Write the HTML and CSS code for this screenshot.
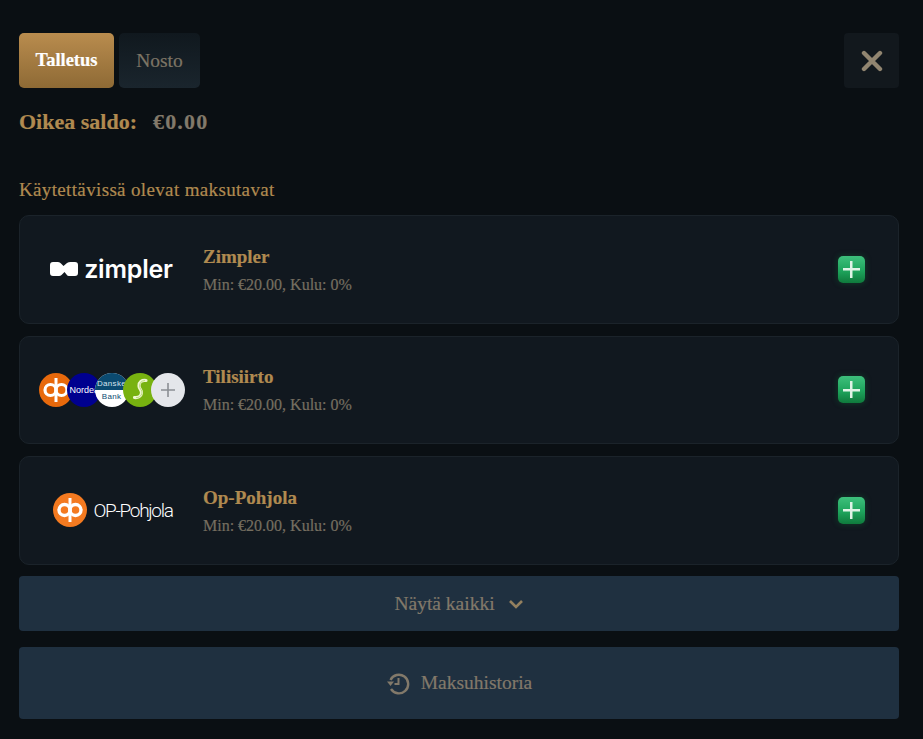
FILE: index.html
```html
<!DOCTYPE html>
<html lang="fi">
  <head>
    <meta charset="UTF-8" />
    <title>Talletus</title>
    <link rel="stylesheet" href="styles.css">
  </head>
  <body>
    <div class="top-row">
      <div class="tabs">
        <button class="tab tab-active">Talletus</button>
        <button class="tab tab-idle">Nosto</button>
      </div>
      <button class="close">
        <svg width="22" height="22" viewBox="0 0 22 22"><path d="M3 3 L19 19 M19 3 L3 19" stroke="#918570" stroke-width="4.4" stroke-linecap="round"/></svg>
      </button>
    </div>

    <div class="balance">
      <span class="balance-label">Oikea saldo:</span>
      <span class="balance-value">€0.00</span>
    </div>

    <h2 class="section-title">Käytettävissä olevat maksutavat</h2>

    <div class="methods">
      <div class="method">
        <div class="logo logo-zimpler">
          <svg width="28" height="14" viewBox="0 0 28 14"><path d="M3 0 H8 Q10 0 11 1.500 L13.500 4 L17 1 Q18.500 0 20.500 0 H25 Q28 0 28 3 V11 Q28 14 25 14 H19 Q17.500 14 16.500 12.500 L14.500 10 L11.500 13 Q10.500 14 9 14 H3 Q0 14 0 11 V3 Q0 0 3 0 Z" fill="#fff"/></svg>
          <span class="zimpler-name">zimpler</span>
        </div>
        <div class="method-info">
          <div class="method-name">Zimpler</div>
          <div class="method-meta">Min: €20.00, Kulu: 0%</div>
        </div>
        <span class="add"></span>
      </div>

      <div class="method">
        <div class="logo logo-banks">
          <span class="bank bank-op">
            <svg width="34" height="34" viewBox="0 0 34 34"><circle cx="11.500" cy="17" r="5.500" fill="none" stroke="#fff" stroke-width="3.200"/><circle cx="22.500" cy="17" r="5.500" fill="none" stroke="#fff" stroke-width="3.200"/><path d="M17 5V29" stroke="#fff" stroke-width="3"/></svg>
          </span>
          <span class="bank bank-nordea">Nordea</span>
          <span class="bank bank-danske"><span class="danske-top">Danske</span><span class="danske-bottom">Bank</span></span>
          <span class="bank bank-s">
            <svg width="34" height="34" viewBox="0 0 34 34"><path d="M23 7.500 C18.500 7 16 9 16 13 C16 16 19 17 18.500 20 C18 23.500 15 25 11.500 24.500" fill="none" stroke="#eef6d0" stroke-width="3.200" stroke-linecap="round"/><path d="M22 7.500 C18.500 7.500 16.500 10 16.500 13 C16.500 16 19.500 17 19 20 C18.500 23 15.500 25 13 24.500" fill="none" stroke="#a9cf5c" stroke-width="0.700"/></svg>
          </span>
          <span class="bank bank-more">
            <svg width="16" height="16" viewBox="0 0 16 16"><path d="M8 1V15M1 8H15" stroke="#8b8f94" stroke-width="1.600"/></svg>
          </span>
        </div>
        <div class="method-info">
          <div class="method-name">Tilisiirto</div>
          <div class="method-meta">Min: €20.00, Kulu: 0%</div>
        </div>
        <span class="add"></span>
      </div>

      <div class="method">
        <div class="logo logo-op">
          <svg width="34" height="34" viewBox="0 0 34 34"><circle cx="17" cy="17" r="17" fill="#f47a20"/><circle cx="11.500" cy="17" r="5.500" fill="none" stroke="#fff" stroke-width="3.400"/><circle cx="22.500" cy="17" r="5.500" fill="none" stroke="#fff" stroke-width="3.400"/><path d="M17 5V29" stroke="#fff" stroke-width="3"/></svg>
          <span class="op-name">OP-Pohjola</span>
        </div>
        <div class="method-info">
          <div class="method-name">Op-Pohjola</div>
          <div class="method-meta">Min: €20.00, Kulu: 0%</div>
        </div>
        <span class="add"></span>
      </div>
    </div>

    <button class="wide-btn show-all">
      Näytä kaikki
      <svg width="16" height="10" viewBox="0 0 16 10"><path d="M2 2 L8 8 L14 2" fill="none" stroke="#94805f" stroke-width="2.600"/></svg>
    </button>
    <button class="wide-btn history">
      <svg width="24" height="24" viewBox="0 0 24 24"><path d="M4.500 9 A9.300 9.300 0 1 1 5 18" fill="none" stroke="#82796a" stroke-width="2.400"/><path d="M1 10.500 L8 10.500 L4.500 15 Z" fill="#82796a"/><path d="M12.500 7V13H8.500" fill="none" stroke="#82796a" stroke-width="2"/></svg>
      Maksuhistoria
    </button>
  </body>
</html>
```

FILE: styles.css
```css
body {
  margin: 0;
  padding: 33px 24px 20px 19px;
  background-color: #0a0f13;
  font-family: "Liberation Serif", serif;
  color: #82796a;
  -webkit-text-stroke: 0.2px;
}
button {
  font-family: inherit;
  border: 0;
  padding: 0;
}
.top-row {
  display: flex;
  justify-content: space-between;
}
.tabs {
  display: flex;
  gap: 5px;
}
.tab {
  height: 55px;
  border-radius: 5px;
  font-size: 19px;
}
.tab-active {
  width: 95px;
  background: linear-gradient(180deg, #b98c4e, #8e6a35);
  color: #fff;
  font-size: 18.5px;
  font-weight: bold;
}
.tab-idle {
  width: 81px;
  background: linear-gradient(180deg, #10181e, #1a252d);
  color: #7d7565;
  font-size: 19.5px;
}
.close {
  width: 55px;
  height: 55px;
  background-color: #12181d;
  border-radius: 4px;
  display: flex;
  align-items: center;
  justify-content: center;
}
.balance {
  display: flex;
  gap: 16px;
  margin-top: 21px;
  font-size: 22px;
  font-weight: bold;
  line-height: 26px;
}
.balance-label {
  color: #b08a50;
}
.balance-value {
  color: #82796a;
  letter-spacing: 1.2px;
}
.section-title {
  margin: 44px 0 14px;
  font-size: 19px;
  font-weight: normal;
  letter-spacing: 0.35px;
  line-height: 22px;
  color: #b08a50;
}
.methods {
  display: flex;
  flex-direction: column;
  gap: 12px;
}
.method {
  height: 106.5px;
  display: flex;
  align-items: center;
  background-color: #11181f;
  border: 1px solid #1b232a;
  border-radius: 10px;
}
.logo {
  width: 183px;
  display: flex;
  align-items: center;
  justify-content: center;
  flex-shrink: 0;
  -webkit-text-stroke: 0;
}
.logo-zimpler {
  gap: 6px;
}
.zimpler-name {
  font-family: Inter, sans-serif;
  font-size: 25px;
  font-weight: 600;
  color: #fff;
  letter-spacing: -0.2px;
}
.logo-op {
  gap: 6px;
  padding-left: 3px;
  width: 180px;
}
.op-name {
  font-family: Roboto, sans-serif;
  font-size: 19px;
  font-weight: 300;
  color: #fff;
  letter-spacing: -1.3px;
}
.bank {
  width: 34px;
  height: 34px;
  border-radius: 50%;
  display: flex;
  align-items: center;
  justify-content: center;
  overflow: hidden;
  margin-left: -6px;
  font-family: "Liberation Sans", sans-serif;
  flex-shrink: 0;
}
.bank:first-child {
  margin-left: 0;
}
.bank-op {
  background-color: #e8690c;
}
.bank-nordea {
  background-color: #00008f;
  color: #fff;
  font-size: 9px;
  justify-content: flex-start;
  padding-left: 3px;
  box-sizing: border-box;
}
.bank-danske {
  flex-direction: column;
  font-size: 8px;
  background-color: #fff;
}
.danske-top {
  width: 100%;
  height: 17px;
  background-color: #0b4a70;
  color: #d5e4ee;
  text-align: center;
  line-height: 22px;
  letter-spacing: 0.3px;
}
.danske-bottom {
  height: 17px;
  color: #0b4a70;
  line-height: 13px;
  letter-spacing: 0.3px;
}
.bank-s {
  background-color: #78b210;
}
.bank-more {
  background-color: #e4e6ea;
}
.method-info {
  flex: 1;
}
.method-name {
  font-size: 19px;
  font-weight: bold;
  color: #b08a50;
  line-height: 24px;
}
.method-meta {
  margin-top: 7px;
  font-size: 16px;
  color: #756e60;
  line-height: 18px;
}
.add {
  width: 27px;
  height: 27px;
  margin-right: 33px;
  border-radius: 5px;
  background:
    linear-gradient(#dff3e6, #dff3e6) center / 17px 2.5px no-repeat,
    linear-gradient(#dff3e6, #dff3e6) center / 2.5px 17px no-repeat,
    linear-gradient(180deg, #3ec07c, #1ea45c 55%, #0f7a3c);
  box-shadow: 0 0 6px rgba(20, 140, 70, 0.35);
}
.wide-btn {
  width: 100%;
  display: flex;
  align-items: center;
  justify-content: center;
  background-color: #1f3040;
  color: #82796a;
  font-size: 19.5px;
  border-radius: 4px;
}
.show-all {
  height: 55px;
  margin-top: 11.5px;
  gap: 13px;
}
.history {
  height: 72px;
  margin-top: 16px;
  gap: 11px;
}
```
